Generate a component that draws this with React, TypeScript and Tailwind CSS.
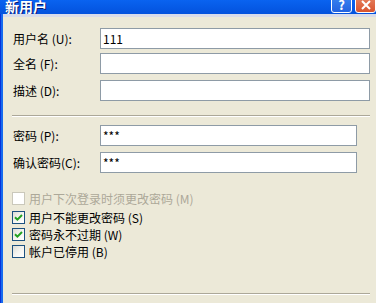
import React from "react";

const font = { fontFamily: '"Noto Sans CJK SC", "Noto Sans", sans-serif' };

function Field({ value, w }: { value?: string; w: string }) {
  return (
    <div
      className={`${w} h-[21px] bg-white border border-[#8e9ba6] flex items-center pl-[2px] text-[12px] leading-none text-black`}
    >
      {value}
    </div>
  );
}

function Row({ label, value, w, mt }: { label: string; value?: string; w: string; mt: string }) {
  return (
    <div className={`flex items-center ${mt}`}>
      <div className="w-[87px] text-[12px] leading-none text-black">{label}</div>
      <Field value={value} w={w} />
    </div>
  );
}

function Check({
  label,
  checked,
  disabled,
  mt,
}: {
  label: string;
  checked?: boolean;
  disabled?: boolean;
  mt: string;
}) {
  return (
    <div className={`flex items-center h-[13px] ${mt}`}>
      <div
        className={`w-[13px] h-[13px] border flex items-center justify-center ${
          disabled
            ? "border-[#cac8bb] bg-white"
            : "border-[#1c5180] bg-gradient-to-br from-[#dcdcd5] via-[#f4f4f0] to-white"
        }`}
      >
        {checked && (
          <svg width="9" height="9" viewBox="0 0 9 9">
            <path d="M1 4.2 L3.4 6.6 L8 2" stroke="#21a121" strokeWidth="2" fill="none" />
          </svg>
        )}
      </div>
      <div
        className={`ml-[4px] text-[12px] leading-none ${disabled ? "text-[#aca899]" : "text-black"}`}
      >
        {label}
      </div>
    </div>
  );
}

function Separator({ mt }: { mt: string }) {
  return (
    <div className={`${mt} ml-[9px] w-[358px]`}>
      <div className="h-px bg-[#aca899]" />
      <div className="h-px bg-white" />
    </div>
  );
}

export default function App() {
  return (
    <div className="w-[376px] h-[303px] overflow-hidden flex flex-col bg-[#ece9d8]" style={font}>
      {/* title bar */}
      <div className="h-[14px] shrink-0 flex items-end overflow-hidden bg-gradient-to-b from-[#0a63f0] to-[#0452dd]">
        <div
          className="ml-[5px] mb-[1px] text-[14px] leading-[14px] font-bold text-white self-end"
          style={{ textShadow: "1px 1px 0 #0a1870" }}
        >
          新用户
        </div>
        <div className="flex-1" />
        <div className="mb-px w-[21px] h-[21px] shrink-0 rounded-[3px] border border-white bg-gradient-to-b from-[#3f8cf5] to-[#2463e0] flex items-end justify-center pb-[1px]">
          <span className="text-white font-bold text-[13px] leading-[13px]">?</span>
        </div>
        <div className="mb-px ml-[3px] w-[21px] h-[21px] shrink-0 rounded-[3px] border border-white bg-gradient-to-b from-[#e88c6a] to-[#d9532e] flex items-end justify-center pb-[2px]">
          <svg width="10" height="10" viewBox="0 0 10 10">
            <path d="M1 1 L9 9 M9 1 L1 9" stroke="white" strokeWidth="2" />
          </svg>
        </div>
      </div>
      <div className="flex flex-1">
        {/* left frame */}
        <div className="w-[3px] shrink-0 flex">
          <div className="w-px bg-[#0831d9]" />
          <div className="w-[2px] bg-[#166aee]" />
        </div>
        <div className="flex-1 flex flex-col">
          <div className="h-[3px] bg-[#d9dcea]" />
          <div className="pl-[10px] flex flex-col">
            <Row label="用户名 (U):" value="111" w="w-[270px]" mt="mt-[11px]" />
            <Row label="全名 (F):" w="w-[270px]" mt="mt-[4px]" />
            <Row label="描述 (D):" w="w-[270px]" mt="mt-[6px]" />
          </div>
          <Separator mt="mt-[14px]" />
          <div className="pl-[10px] flex flex-col">
            <Row label="密码 (P):" value="***" w="w-[257px]" mt="mt-[8px]" />
            <Row label="确认密码(C):" value="***" w="w-[257px]" mt="mt-[6px]" />
          </div>
          <div className="pl-[9px] flex flex-col">
            <Check label="用户下次登录时须更改密码 (M)" disabled mt="mt-[19px]" />
            <Check label="用户不能更改密码 (S)" checked mt="mt-[6px]" />
            <Check label="密码永不过期 (W)" checked mt="mt-[4px]" />
            <Check label="帐户已停用 (B)" mt="mt-[4px]" />
          </div>
          <Separator mt="mt-[35px]" />
        </div>
      </div>
    </div>
  );
}
